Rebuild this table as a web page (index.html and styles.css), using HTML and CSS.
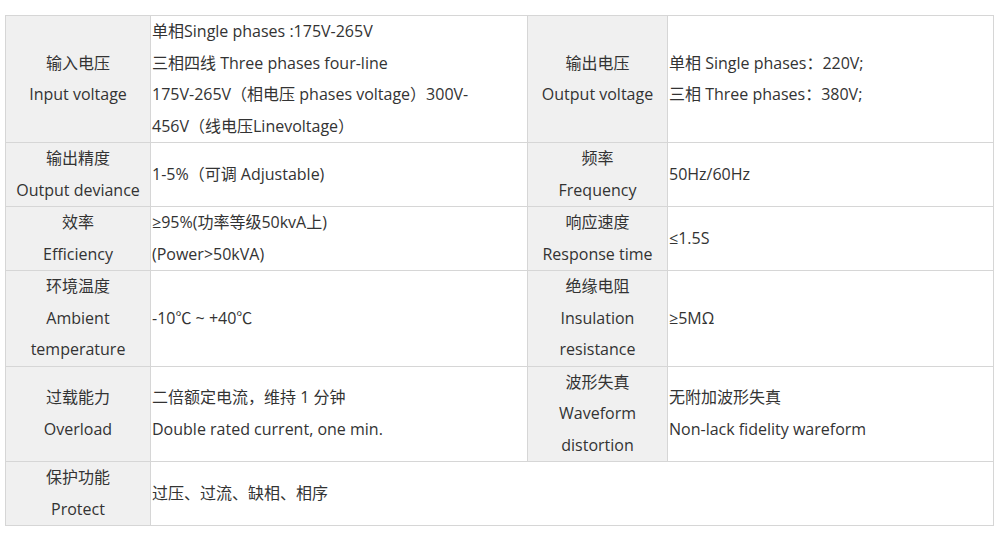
FILE: index.html
```html
<!DOCTYPE html>
<html lang="zh-CN">
<head>
<meta charset="utf-8">
<title>Specifications</title>
<link rel="stylesheet" href="styles.css">
</head>
<body>
<div class="wrap">
<table class="spec">
  <colgroup>
    <col class="c1"><col class="c2"><col class="c3"><col class="c4">
  </colgroup>
  <tbody>
    <tr class="r4">
      <th>输入电压<br>Input voltage</th>
      <td>单相Single phases :175V-265V<br>三相四线 Three phases four-line<br>175V-265V（相电压 phases voltage）300V-<br>456V（线电压Linevoltage）</td>
      <th>输出电压<br>Output voltage</th>
      <td>单相 Single phases：220V;<br>三相 Three phases：380V;</td>
    </tr>
    <tr>
      <th>输出精度<br>Output deviance</th>
      <td>1-5%（可调 Adjustable)</td>
      <th>频率<br>Frequency</th>
      <td>50Hz/60Hz</td>
    </tr>
    <tr>
      <th>效率<br>Efficiency</th>
      <td>≥95%(功率等级50kvA上)<br>(Power&gt;50kVA)</td>
      <th>响应速度<br>Response time</th>
      <td>≤1.5S</td>
    </tr>
    <tr>
      <th>环境温度<br>Ambient<br>temperature</th>
      <td>-10℃ ~ +40℃</td>
      <th>绝缘电阻<br>Insulation<br>resistance</th>
      <td>≥5MΩ</td>
    </tr>
    <tr>
      <th>过载能力<br>Overload</th>
      <td>二倍额定电流，维持 1 分钟<br>Double rated current, one min.</td>
      <th>波形失真<br>Waveform<br>distortion</th>
      <td>无附加波形失真<br>Non-lack fidelity wareform</td>
    </tr>
    <tr>
      <th>保护功能<br>Protect</th>
      <td colspan="3">过压、过流、缺相、相序</td>
    </tr>
  </tbody>
</table>
</div>
</body>
</html>
```

FILE: styles.css
```css
html, body {
  margin: 0;
  padding: 0;
  background: #ffffff;
}

.wrap {
  padding: 15px 6px 0 5px;
}

.spec {
  width: 988px;
  border-collapse: collapse;
  table-layout: fixed;
  font-family: "Open Sans", "Noto Sans CJK SC", sans-serif;
  font-size: 16px;
  line-height: 31.5px;
  color: #333333;
}

.c1 { width: 145px; }
.c2 { width: 377px; }
.c3 { width: 140px; }
.c4 { width: 326px; }

.spec th,
.spec td {
  border: 1px solid #d6d6d6;
  padding: 0;
  vertical-align: middle;
  white-space: nowrap;
}

.spec th {
  background: #f0f0f0;
  font-weight: normal;
  text-align: center;
}

.spec td {
  text-align: left;
  padding-left: 1px;
}
```
